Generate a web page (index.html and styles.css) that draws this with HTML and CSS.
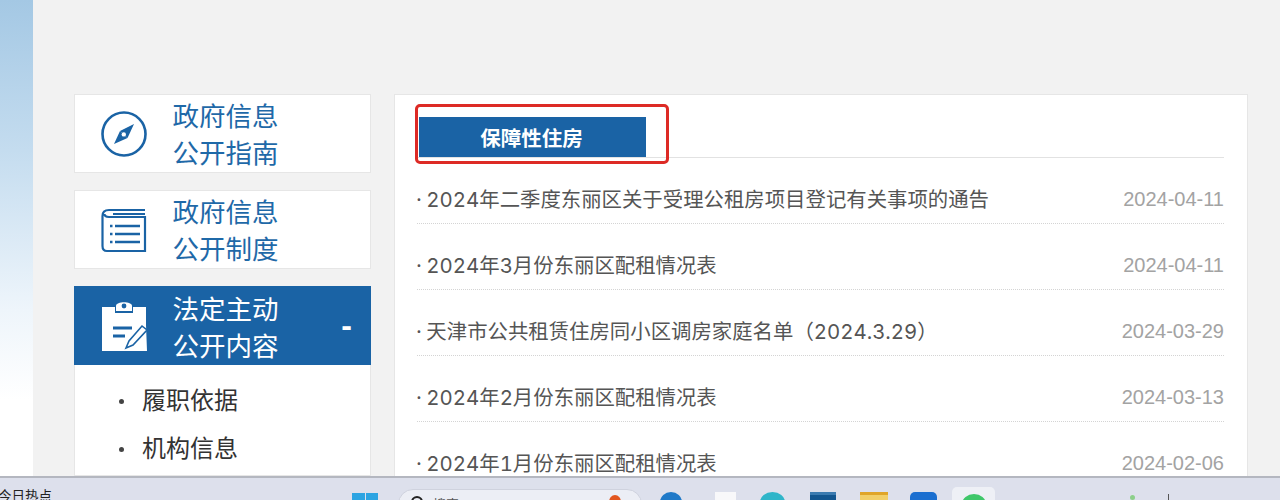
FILE: index.html
```html
<!DOCTYPE html>
<html lang="zh-CN">
<head>
    <meta charset="UTF-8">
    <meta name="viewport" content="width=device-width, initial-scale=1.0">
    <title>保障性住房</title>
    <link rel="stylesheet" href="styles.css">
</head>
<body>
    <div class="page">
        <div class="strip"></div>
        <div class="sidebar">
            <a class="card">
                <svg class="card-icon" viewBox="0 0 46 46">
                    <circle cx="23" cy="23" r="21.5" fill="none" stroke="#1a63a5" stroke-width="2.6"/>
                    <path d="M33 13 L26.5 27 L19 20 Z" fill="#1a63a5"/>
                    <path d="M13 33 L19 20 L26.5 27 Z" fill="#1a63a5"/>
                    <circle cx="22.8" cy="23.4" r="2.2" fill="#fff"/>
                </svg>
                <span class="card-text">政府信息<br>公开指南</span>
            </a>
            <a class="card">
                <svg class="card-icon" viewBox="0 0 46 46">
                    <path d="M44 3 H8 C3 3 1.500 6 1.500 9 V39 C1.500 42 3 44 6 44 H44 V10 H8 C5 10 3.500 8.500 3.500 7" fill="none" stroke="#1a63a5" stroke-width="2.2"/>
                    <path d="M12 7 H44" stroke="#1a63a5" stroke-width="2"/>
                    <path d="M14 19 H39 M14 27 H39 M14 35 H39" stroke="#1a63a5" stroke-width="2.4"/>
                    <path d="M9 19 H11.500 M9 27 H11.500 M9 35 H11.500" stroke="#1a63a5" stroke-width="2.4"/>
                </svg>
                <span class="card-text">政府信息<br>公开制度</span>
            </a>
            <a class="card card-active">
                <svg class="card-icon" viewBox="0 0 46 50">
                    <path d="M1 6 H14 V12 H32 V6 H45 V24 L46 50 H1 Z" fill="#fff"/>
                    <path d="M15 5 C15 0 31 0 31 5 L31 10 H15 Z" fill="#fff"/>
                    <circle cx="23" cy="5" r="2.400" fill="#1a63a5"/>
                    <path d="M12 27 H31 M12 35 H24" stroke="#1a63a5" stroke-width="3.200"/>
                    <path d="M25 47 L28 40 L41 25 L46 29 L32 44 Z" fill="#fff" stroke="#1a63a5" stroke-width="1.600"/>
                </svg>
                <span class="card-text">法定主动<br>公开内容</span>
                <span class="card-toggle">-</span>
            </a>
            <ul class="submenu">
                <li>履职依据</li>
                <li>机构信息</li>
            </ul>
        </div>
        <div class="panel">
            <div class="panel-head">
                <div class="tab">保障性住房</div>
                <div class="mark"></div>
            </div>
            <ul class="news">
                <li><span class="news-title">· 2024年二季度东丽区关于受理公租房项目登记有关事项的通告</span><span class="news-date">2024-04-11</span></li>
                <li><span class="news-title">· 2024年3月份东丽区配租情况表</span><span class="news-date">2024-04-11</span></li>
                <li><span class="news-title">· 天津市公共租赁住房同小区调房家庭名单（2024.3.29）</span><span class="news-date">2024-03-29</span></li>
                <li><span class="news-title">· 2024年2月份东丽区配租情况表</span><span class="news-date">2024-03-13</span></li>
                <li><span class="news-title">· 2024年1月份东丽区配租情况表</span><span class="news-date">2024-02-06</span></li>
            </ul>
        </div>
    </div>
    <div class="taskbar">
        <div class="hot">今日热点</div>
        <div class="start"><i></i><i></i></div>
        <div class="search">
            <span class="search-glass"></span>
            <span class="search-word">搜索</span>
            <span class="search-dot"></span>
        </div>
        <div class="app app-edge"></div>
        <div class="app app-doc"></div>
        <div class="app app-teal"></div>
        <div class="app app-store"></div>
        <div class="app app-folder"></div>
        <div class="app app-blue"></div>
        <div class="app-active"><div class="app app-green"></div></div>
        <div class="tray-dot"></div>
        <div class="tray-tick"></div>
    </div>
</body>
</html>
```

FILE: styles.css
```css
html, body {
    margin: 0;
    height: 500px;
    overflow: hidden;
}
body {
    font-family: "Liberation Sans", "Noto Sans CJK SC", sans-serif;
    background-color: #f2f2f2;
    color: #555;
}
ul {
    list-style: none;
    margin: 0;
    padding: 0;
}
.page {
    display: flex;
    height: 476px;
    overflow: hidden;
}
.strip {
    width: 33px;
    flex: none;
    background: linear-gradient(to bottom, #a4c8e4 0, #c4dcef 150px, #eef5fb 310px, #fff 400px);
}
.sidebar {
    width: 297px;
    flex: none;
    margin: 94px 0 0 41px;
    display: flex;
    flex-direction: column;
}
.card {
    height: 79px;
    box-sizing: border-box;
    margin-bottom: 17px;
    padding-left: 26px;
    display: flex;
    align-items: center;
    background: white;
    border: 1px solid #e6e6e6;
    color: #1f69a8;
}
.card-icon {
    width: 46px;
    height: 46px;
    flex: none;
}
.card-text {
    margin: 4px 0 0 25.500px;
    font-size: 26.500px;
    line-height: 36.500px;
}
.card-active {
    margin-bottom: 0;
    background: #1a63a5;
    border-color: #1a63a5;
    color: white;
}
.card-active .card-icon {
    height: 50px;
}
.card-active .card-text {
    margin-top: 6px;
}
.card-toggle {
    margin-left: auto;
    margin-right: 18px;
    font-size: 32px;
    font-weight: bold;
}
.submenu {
    flex: 1;
    padding-top: 12px;
    background: white;
    border: 1px solid #e6e6e6;
    border-top: none;
}
.submenu li {
    position: relative;
    padding-left: 67px;
    font-size: 24px;
    line-height: 48px;
    color: #333;
}
.submenu li::before {
    content: "";
    position: absolute;
    left: 44px;
    top: 22px;
    width: 5px;
    height: 5px;
    border-radius: 50%;
    background: #444;
}
.panel {
    width: 854px;
    flex: none;
    box-sizing: border-box;
    margin: 94px 0 0 23px;
    padding: 22px 23px 0 22px;
    background: white;
    border: 1px solid #e6e6e6;
    border-bottom: none;
}
.panel-head {
    position: relative;
    height: 41px;
    box-sizing: border-box;
    padding-left: 2px;
    border-bottom: 1px solid #e2e2e2;
}
.tab {
    width: 225px;
    height: 40px;
    padding-right: 2px;
    background: #1a63a5;
    color: white;
    font-size: 20.500px;
    font-weight: bold;
    line-height: 44px;
    text-align: center;
}
.mark {
    position: absolute;
    left: -2px;
    top: -13px;
    width: 254px;
    height: 60px;
    box-sizing: border-box;
    border: 3px solid #dd2a25;
    border-radius: 5px;
}
.news li {
    height: 66px;
    box-sizing: border-box;
    padding-top: 18px;
    display: flex;
    justify-content: space-between;
    line-height: 46px;
    border-bottom: 1px dotted #d4d4d4;
}
.news-title {
    margin: 1px 0 0 -1px;
    font-family: Inter, "Noto Sans CJK SC", sans-serif;
    font-size: 20.400px;
    font-feature-settings: "tnum";
    word-spacing: -1px;
    color: #555;
}
.news-date {
    font-size: 20px;
    color: #a3a3a3;
}
.taskbar {
    height: 24px;
    box-sizing: border-box;
    display: flex;
    align-items: flex-start;
    overflow: hidden;
    background: #dde0ec;
    border-top: 2px solid #b4b7c0;
}
.hot {
    width: 354px;
    flex: none;
    margin-top: 10px;
    margin-left: -2px;
    font-size: 13.500px;
    line-height: 18px;
    color: #222;
}
.start {
    width: 26px;
    flex: none;
    margin-top: 15px;
    display: flex;
    gap: 1px;
}
.start i {
    flex: 1;
    height: 12px;
    background: #2ca4e2;
}
.search {
    width: 244px;
    height: 30px;
    flex: none;
    box-sizing: border-box;
    margin: 11px 0 0 20px;
    padding: 6px 0 0 12px;
    display: flex;
    background: #eceef5;
    border: 1px solid #cfd2de;
    border-radius: 15px;
}
.search-glass {
    width: 8px;
    height: 8px;
    border: 2px solid #222;
    border-radius: 50%;
}
.search-word {
    margin-left: 10px;
    font-size: 13px;
    line-height: 18px;
    color: #555;
}
.search-dot {
    width: 12px;
    height: 14px;
    margin: -1px 0 0 150px;
    border-radius: 50%;
    background: #e2561f;
}
.app {
    flex: none;
    height: 20px;
    margin-top: 14px;
}
.app-edge {
    width: 22px;
    margin-left: 18px;
    border-radius: 50%;
    background: #1f79c8;
}
.app-doc {
    width: 21px;
    margin-left: 33px;
    background: #f8f8fa;
}
.app-teal {
    width: 25px;
    margin-left: 24px;
    border-radius: 50%;
    background: #2fb5c9;
}
.app-store {
    width: 26px;
    margin-left: 25px;
    border-top: 3px solid #3b7bb0;
    background: #13568f;
}
.app-folder {
    width: 28px;
    margin-left: 24px;
    border-top: 3px solid #e0a528;
    background: #f2cf68;
}
.app-blue {
    width: 27px;
    margin-left: 22px;
    border-radius: 5px;
    background: #1b6fd0;
}
.app-active {
    width: 43px;
    height: 30px;
    flex: none;
    margin: 9px 0 0 15px;
    display: flex;
    justify-content: center;
    background: #eef0f6;
    border-radius: 5px;
}
.app-green {
    width: 24px;
    margin-top: 7px;
    border-radius: 50%;
    background: #3fc76a;
}
.tray-dot {
    width: 5px;
    height: 5px;
    flex: none;
    margin: 17px 0 0 135px;
    border-radius: 50%;
    background: #8ccf8a;
}
.tray-tick {
    width: 1px;
    height: 6px;
    flex: none;
    margin: 16px 0 0 33px;
    background: #555;
}
```
